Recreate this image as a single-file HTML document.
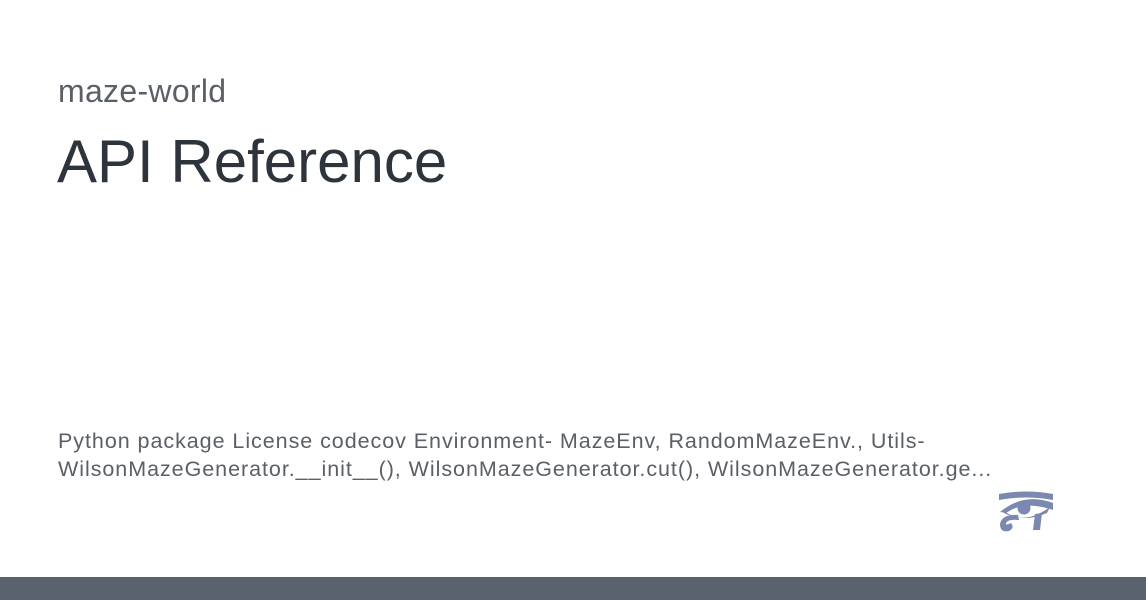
<!DOCTYPE html>
<html><head><style>
body{margin:0;width:1146px;height:600px;background:#fff;position:relative;overflow:hidden;font-family:"Liberation Sans",sans-serif}
.a{position:absolute;left:58px;top:73px;font-size:32px;letter-spacing:0.3px;color:#5b6066}
.b{position:absolute;left:57px;top:127px;font-size:60px;color:#2e343b}
.c{position:absolute;left:58px;top:427px;font-size:21.5px;line-height:28px;color:#5b6066;width:1050px;letter-spacing:0.95px;white-space:nowrap}
.bar{position:absolute;left:0;top:577px;width:1146px;height:23px;background:#5a626d}
</style></head><body>
<div class="a">maze-world</div>
<div class="b">API Reference</div>
<div class="c">Python package License codecov Environment- MazeEnv, RandomMazeEnv., Utils-<br>WilsonMazeGenerator.__init__(), WilsonMazeGenerator.cut(), WilsonMazeGenerator.ge...</div>
<svg style="position:absolute;left:996px;top:490px" width="60" height="44" viewBox="0 0 60 44">
<g fill="#7b89b1">
<path d="M3 4 Q30 -1 57 4 L57 10 Q30 5 3 10Z"/>
<path d="M4 22 Q28 2 57 13 L57 20 Q28 10 10 23Z"/>
<path d="M8 21 Q28 36 54 17 L51 23 Q28 33 8 23Z"/>
<circle cx="28" cy="18" r="6.5"/>
<path d="M22 25 Q6 24 4 34 Q4 43 13 41 Q19 38 15 33 Q9 36 10 33 Q12 29 23 30Z"/>
<path d="M39 24 L46 23 L44 40 L37 40Z"/>
</g>
</svg>
<div class="bar"></div>
</body></html>
